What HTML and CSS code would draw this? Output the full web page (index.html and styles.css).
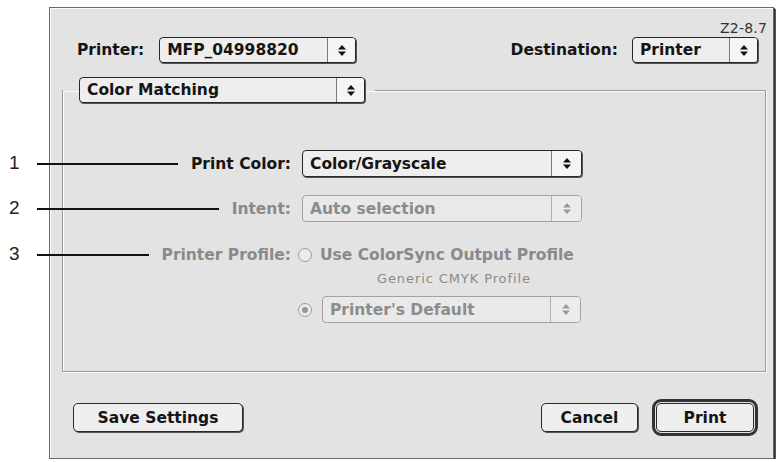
FILE: index.html
```html
<!DOCTYPE html>
<html>
<head>
<meta charset="utf-8">
<link rel="stylesheet" href="styles.css">
</head>
<body>
<div class="page">
  <div class="window">
    <div class="version">Z2-8.7</div>
    <div class="topbar">
      <div class="field">
        <span class="lbl">Printer:</span>
        <div class="popup w-printer"><span class="ptext">MFP_04998820</span><span class="arrows"><svg width="8" height="11" viewBox="0 0 8 11"><polygon points="0,4.5 4,0 8,4.5"/><polygon points="0,6.5 4,11 8,6.5"/></svg></span></div>
      </div>
      <div class="field">
        <span class="lbl">Destination:</span>
        <div class="popup w-dest"><span class="ptext">Printer</span><span class="arrows"><svg width="8" height="11" viewBox="0 0 8 11"><polygon points="0,4.5 4,0 8,4.5"/><polygon points="0,6.5 4,11 8,6.5"/></svg></span></div>
      </div>
    </div>
    <fieldset class="group">
      <legend class="legend">
        <div class="popup w-panel"><span class="ptext">Color Matching</span><span class="arrows"><svg width="8" height="11" viewBox="0 0 8 11"><polygon points="0,4.5 4,0 8,4.5"/><polygon points="0,6.5 4,11 8,6.5"/></svg></span></div>
      </legend>
      <div class="row row-1">
        <div class="label"><span class="callout"><span class="num">1</span><span class="line"></span></span><span class="ltext">Print Color:</span></div>
        <div class="popup w-wide"><span class="ptext">Color/Grayscale</span><span class="arrows"><svg width="8" height="11" viewBox="0 0 8 11"><polygon points="0,4.5 4,0 8,4.5"/><polygon points="0,6.5 4,11 8,6.5"/></svg></span></div>
      </div>
      <div class="row row-2">
        <div class="label disabled"><span class="callout"><span class="num">2</span><span class="line"></span></span><span class="ltext">Intent:</span></div>
        <div class="popup w-wide off"><span class="ptext">Auto selection</span><span class="arrows"><svg width="8" height="11" viewBox="0 0 8 11"><polygon points="0,4.5 4,0 8,4.5"/><polygon points="0,6.5 4,11 8,6.5"/></svg></span></div>
      </div>
      <div class="row row-3">
        <div class="label disabled"><span class="callout"><span class="num">3</span><span class="line"></span></span><span class="ltext">Printer Profile:</span></div>
        <div class="choice"><span class="radio"></span><span class="ctext">Use ColorSync Output Profile</span></div>
      </div>
      <div class="row row-4">
        <div></div>
        <div class="subtext">Generic CMYK Profile</div>
      </div>
      <div class="row row-5">
        <div></div>
        <div class="choice"><span class="radio on"></span><div class="popup w-def off"><span class="ptext">Printer's Default</span><span class="arrows"><svg width="8" height="11" viewBox="0 0 8 11"><polygon points="0,4.5 4,0 8,4.5"/><polygon points="0,6.5 4,11 8,6.5"/></svg></span></div></div>
      </div>
    </fieldset>
    <div class="footer">
      <button class="btn w-save">Save Settings</button>
      <div class="right">
        <button class="btn w-cancel">Cancel</button>
        <span class="ring"><button class="btn w-print">Print</button></span>
      </div>
    </div>
  </div>
</div>
</body>
</html>
```

FILE: styles.css
```css
* { box-sizing: border-box; }
html, body { margin: 0; padding: 0; background: #ffffff; }
body {
  font-family: "DejaVu Sans", Verdana, sans-serif;
  font-weight: bold;
  font-size: 15.5px;
  color: #151515;
}
.page { padding: 7px 0 0 49px; }
.window {
  width: 725px;
  height: 452px;
  background: #e3e3e3;
  border: 1px solid #6a6a6a;
  box-shadow: 1px 1px 0 #333, 2px 2px 0 #555, inset 1px 1px 0 #fafafa;
  padding: 13px 0 0 0;
  position: relative;
}
.version {
  text-align: right;
  padding-right: 6px;
  font-weight: normal;
  font-size: 14px;
  line-height: 14px;
  height: 14px;
  color: #333;
  letter-spacing: 0.2px;
}
.topbar {
  margin-top: 2px;
  display: flex;
  justify-content: space-between;
  padding: 0 15px 0 27px;
}
.field { display: flex; align-items: center; gap: 14px; }
.field:first-child { gap: 15px; }

.popup {
  height: 26px;
  display: flex;
  align-items: stretch;
  background: #eeeeee;
  border: 1px solid #262626;
  border-radius: 4px;
  box-shadow: 1px 1px 0 #555;
  color: #151515;
}
.popup .ptext {
  flex: 1;
  display: flex;
  align-items: center;
  padding-left: 7px;
  white-space: nowrap;
  overflow: hidden;
}
.popup .arrows {
  width: 28px;
  border-left: 1px solid #7a7a7a;
  background: #f5f5f5;
  border-radius: 0 3px 3px 0;
  display: flex;
  align-items: center;
  justify-content: center;
}
.popup .arrows svg { fill: #111; display: block; }
.popup.off {
  border-color: #a2a2a2;
  box-shadow: none;
  color: #8c8c8c;
  background: #e9e9e9;
}
.popup.off .arrows { border-left-color: #b0b0b0; background: #ececec; }
.popup.off .arrows svg { fill: #9a9a9a; }

.w-printer { width: 197px; }
.w-dest { width: 126px; }
.w-panel { width: 286px; }
.w-wide { width: 280px; height: 27px; }
.w-wide .arrows { width: 30px; }
.w-def { width: 259px; height: 27px; margin-left: 10px; }
.w-def .arrows { width: 30px; }

.group {
  margin: 14px 7px 0 12px;
  padding: 0 0 48px 0;
  border: 1px solid #9c9c9c;
  box-shadow: 1px 1px 0 #fbfbfb, inset 1px 1px 0 #fbfbfb;
  min-width: 0;
}
.legend {
  padding: 0 10px 0 16px;
  margin: 0;
}

.row {
  display: grid;
  grid-template-columns: 228px 1fr;
  column-gap: 11px;
  align-items: center;
}
.row-1 { margin-top: 47px; }
.row-2 { margin-top: 18px; }
.row-3 { margin-top: 23px; height: 20px; }
.row-4 { margin-top: 7px; }
.row-5 { margin-top: 10px; }

.label {
  display: flex;
  align-items: center;
  white-space: nowrap;
}
.label.disabled .ltext { color: #8a8a8a; }
.callout {
  flex: 1;
  display: flex;
  align-items: center;
  margin-left: -55px;
  margin-right: 13px;
}
.num {
  width: 29px;
  font-family: "Liberation Sans", Arial, sans-serif;
  font-weight: normal;
  font-size: 19px;
  color: #222;
  line-height: 20px;
  position: relative;
  top: -1px;
  padding-left: 1px;
}
.line {
  flex: 1;
  height: 2px;
  background: #111;
}

.choice { display: flex; align-items: center; }
.radio {
  width: 14px;
  height: 14px;
  border-radius: 50%;
  border: 1px solid #9a9a9a;
  background: #ececec;
  margin-left: -4px;
  flex: none;
  display: flex;
  align-items: center;
  justify-content: center;
}
.radio.on::after {
  content: "";
  width: 6px;
  height: 6px;
  border-radius: 50%;
  background: #959595;
}
.ctext { margin-left: 8px; color: #8a8a8a; white-space: nowrap; }
.subtext {
  padding-left: 75px;
  font-weight: normal;
  font-size: 13px;
  line-height: 14px;
  color: #8a8a8a;
  letter-spacing: 0.9px;
}

.footer {
  margin-top: 27px;
  height: 37px;
  display: flex;
  align-items: center;
  justify-content: space-between;
  padding: 0 15px 0 23px;
}
.right { display: flex; align-items: center; gap: 14px; }
.btn {
  font: inherit;
  color: #151515;
  height: 29px;
  background: #efefef;
  border: 1px solid #2a2a2a;
  border-radius: 5px;
  box-shadow: 1px 1px 0 #555;
  padding: 0;
  margin: 0;
  display: block;
}
.w-save { width: 170px; }
.w-cancel { width: 97px; }
.w-print { width: 98px; }
.ring {
  display: block;
  border: 3px solid #333;
  border-radius: 9px;
  padding: 1px;
}
.ring .btn { box-shadow: none; }
```
